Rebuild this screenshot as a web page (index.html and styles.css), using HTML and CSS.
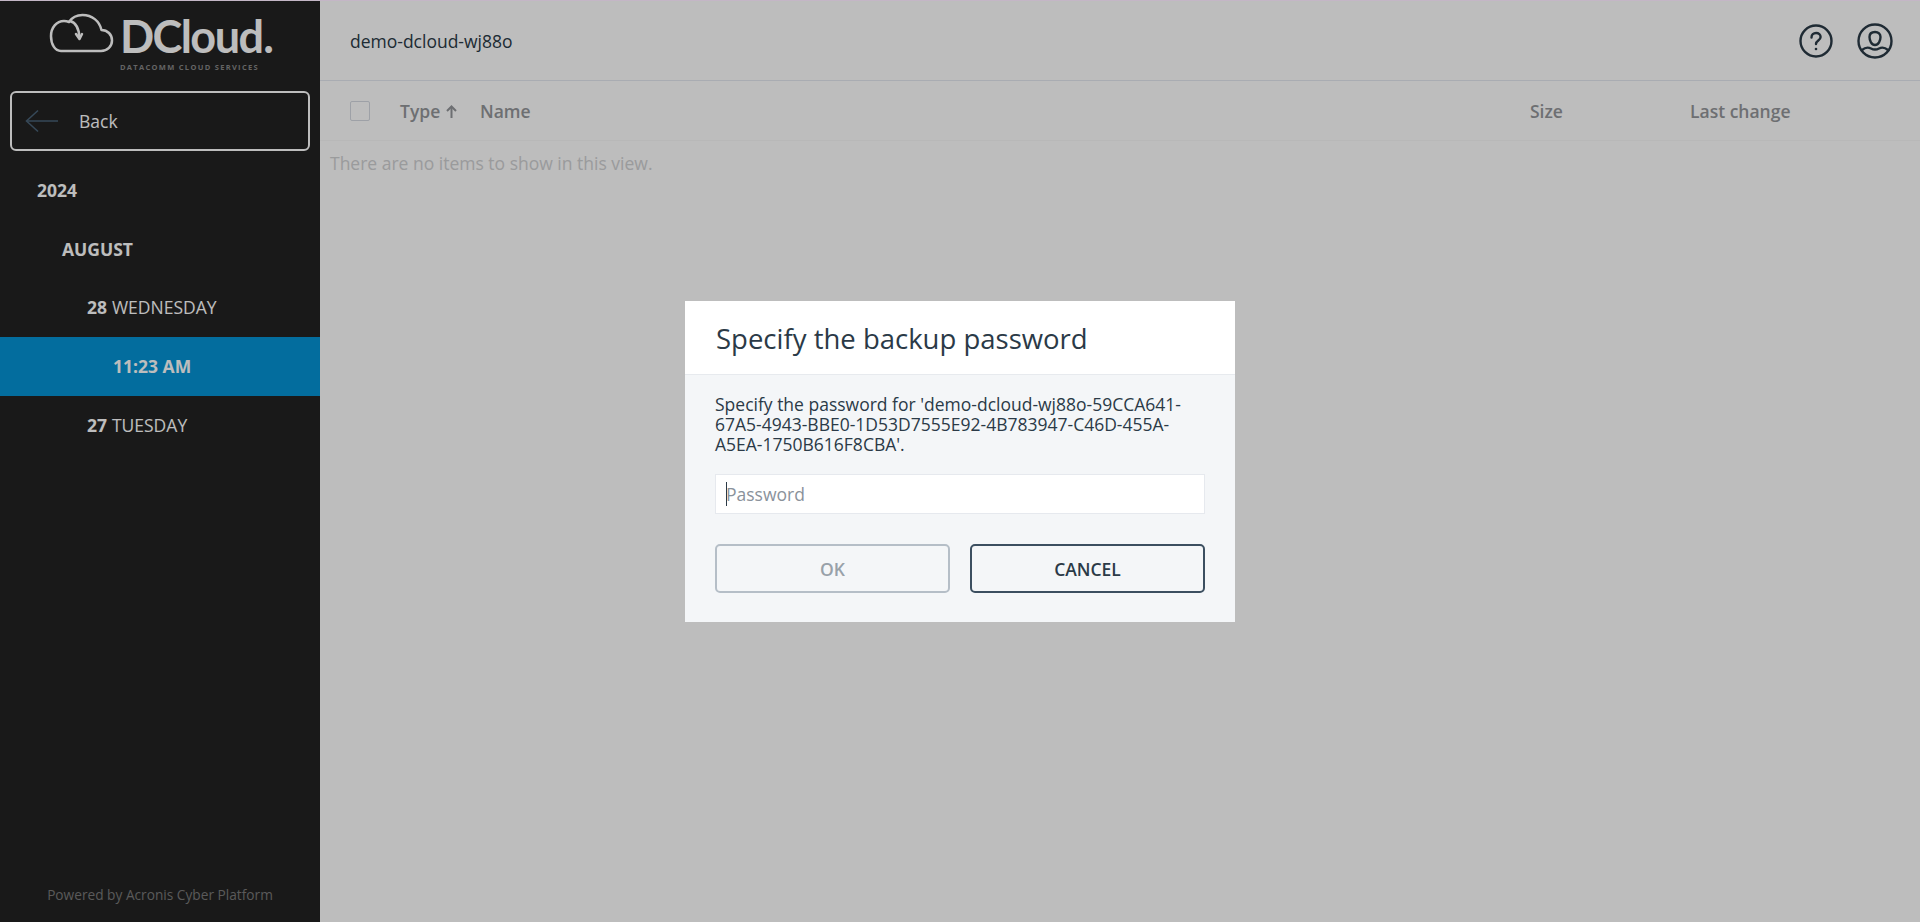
FILE: index.html
```html
<!DOCTYPE html>
<html lang="en">
<head>
    <meta charset="UTF-8">
    <meta name="viewport" content="width=device-width, initial-scale=1.0">
    <title>Backup browser</title>
    <link rel="stylesheet" href="styles.css">
</head>
<body>
    <div class="app">
        <aside class="sidebar">
            <div class="logo">
                <svg class="logo-cloud" width="65" height="40" viewBox="0 0 65 40" fill="none" stroke="currentColor" stroke-width="2.5" stroke-linecap="round" stroke-linejoin="round">
                    <path d="M12 38h40c6.500 0 11-4.800 11-10.500 0-6-4.500-10.500-10.500-10.500C50.500 8 43 2 33.500 2c-5.800 0-10.500 2.500-13.500 7-1.700-.7-3.300-1-5-1C7.500 8 2 14.500 2 23c0 8.500 4 15 10 15z"/>
                    <path d="M21 8c5.500 1.500 9 7 9.500 17"/>
                    <path d="M27 21l3.500 5 2.500-5"/>
                </svg>
                <div class="logo-text">
                    <div class="logo-name">DCloud<span class="logo-dot">.</span></div>
                    <div class="logo-tag">DATACOMM CLOUD SERVICES</div>
                </div>
            </div>
            <a class="btn-back">
                <svg width="34" height="24" viewBox="0 0 34 24" fill="none" stroke="currentColor" stroke-width="1.500">
                    <path d="M33 12H2"/>
                    <path d="M13 1.500L1.500 12 13 22.500"/>
                </svg>
                <span>Back</span>
            </a>
            <ul class="tree">
                <li class="tree-item level-0"><b>2024</b></li>
                <li class="tree-item level-1"><b>AUGUST</b></li>
                <li class="tree-item level-2"><b>28</b> WEDNESDAY</li>
                <li class="tree-item level-3 active"><b>11:23 AM</b></li>
                <li class="tree-item level-2"><b>27</b> TUESDAY</li>
            </ul>
            <div class="powered">Powered by Acronis Cyber Platform</div>
        </aside>

        <main class="content">
            <header class="topbar">
                <div class="topbar-title">demo-dcloud-wj88o</div>
                <div class="topbar-icons">
                    <svg width="34" height="34" viewBox="0 0 34 34" fill="none" stroke="currentColor" stroke-width="2.400" stroke-linecap="round">
                        <circle cx="17" cy="17" r="15.500"/>
                        <path d="M12.500 13.500c0-2.800 2-4.500 4.600-4.500 2.600 0 4.500 1.700 4.500 4 0 3.500-4.600 3.500-4.600 7"/>
                        <circle cx="17" cy="25" r="1.300" fill="currentColor" stroke="none"/>
                    </svg>
                    <svg width="36" height="36" viewBox="0 0 36 36" fill="none" stroke="currentColor" stroke-width="2.400" stroke-linecap="round">
                        <circle cx="18" cy="18" r="16.500"/>
                        <path d="M18 9c-3.500 0-5.500 2-5.500 5 0 3.500 2 8 5.500 8s5.500-4.500 5.500-8c0-3-2-5-5.500-5z"/>
                        <path d="M5 27c3-2.500 6-3 9-1.500 2.500 1.300 5.500 1.300 8 0 3-1.500 6-1 9 1.500"/>
                    </svg>
                </div>
            </header>
            <div class="list-head">
                <span class="check"></span>
                <span class="col col-type">Type
                    <svg class="sort" width="11" height="13" viewBox="0 0 11 13" fill="none" stroke="currentColor" stroke-width="2">
                        <path d="M5.500 13V2"/>
                        <path d="M1 6l4.500-4.500L10 6"/>
                    </svg>
                </span>
                <span class="col col-name">Name</span>
                <span class="col col-size">Size</span>
                <span class="col col-change">Last change</span>
            </div>
            <div class="empty">There are no items to show in this view.</div>
        </main>
    </div>

    <div class="overlay">
        <div class="modal">
            <div class="modal-head">Specify the backup password</div>
            <div class="modal-body">
                <p class="modal-text">Specify the password for 'demo-dcloud-wj88o-59CCA641-67A5-4943-BBE0-1D53D7555E92-4B783947-C46D-455A-A5EA-1750B616F8CBA'.</p>
                <div class="field">
                    <input type="password" class="input" placeholder="Password">
                </div>
                <div class="modal-actions">
                    <button class="btn btn-disabled" disabled>OK</button>
                    <button class="btn">CANCEL</button>
                </div>
            </div>
        </div>
    </div>
    <div class="top-line"></div>
</body>
</html>
```

FILE: styles.css
```css
* {
    box-sizing: border-box;
}

html, body {
    height: 100%;
}

body {
    margin: 0;
    font-family: 'Open Sans', 'Noto Sans', sans-serif;
    font-size: 17.5px;
    color: #2b3a47;
    background-color: white;
    overflow: hidden;
}

.app {
    display: flex;
    height: 100%;
}

.top-line {
    position: fixed;
    top: 0;
    left: 0;
    right: 0;
    height: 1px;
    background-color: #c4b6c6;
}

/* sidebar */
.sidebar {
    width: 320px;
    flex-shrink: 0;
    display: flex;
    flex-direction: column;
    background-color: #232323;
    color: white;
}

.logo {
    height: 75px;
    padding: 13px 0 0 49px;
    display: flex;
    gap: 6px;
}

.logo-name {
    font-family: 'Lato', sans-serif;
    font-weight: 700;
    font-size: 45px;
    line-height: 40px;
    letter-spacing: -1.6px;
    margin-top: 3px;
    white-space: nowrap;
}

.logo-dot {
    margin-left: 1px;
}

.logo-tag {
    margin-top: 6px;
    font-size: 7.500px;
    line-height: 10px;
    font-weight: 700;
    letter-spacing: 1.300px;
    color: #888;
    white-space: nowrap;
}

.btn-back {
    margin: 16px 10px 9px;
    height: 60px;
    padding-left: 13px;
    display: flex;
    align-items: center;
    gap: 20px;
    border: 2px solid white;
    border-radius: 6px;
}

.btn-back svg {
    color: #4a6378;
}

.tree {
    list-style: none;
    margin: 0;
    padding: 0;
}

.tree-item {
    height: 59px;
    display: flex;
    align-items: center;
    gap: 0.28em;
}

.tree-item b {
    font-weight: 700;
}

.level-0 { padding-left: 37px; }
.level-1 { padding-left: 62px; }
.level-2 { padding-left: 87px; padding-bottom: 1px; }
.level-3 { padding-left: 113px; padding-bottom: 1px; }

.tree-item.active {
    background-color: #0594d5;
}

.powered {
    margin-top: auto;
    padding-bottom: 17px;
    text-align: center;
    font-size: 13.700px;
    line-height: 20px;
    color: #7a7a7a;
}

/* main area */
.content {
    flex: 1;
    min-width: 0;
}

.topbar {
    height: 81px;
    padding: 2px 27px 0 30px;
    display: flex;
    align-items: center;
    justify-content: space-between;
    border-bottom: 1px solid #e4e9f1;
}

.topbar-icons {
    display: flex;
    align-items: center;
    gap: 24px;
    margin-top: -1px;
}

.list-head {
    height: 60px;
    padding-left: 30px;
    display: flex;
    align-items: center;
    border-bottom: 1px solid #f8f8f8;
    font-weight: 600;
    color: #94969a;
}

.check {
    width: 20px;
    height: 20px;
    border: 1px solid #d5dae2;
    border-radius: 2px;
    background-color: white;
}

.col {
    white-space: nowrap;
}

.col-type { margin-left: 30px; width: 80px; }
.col-name { width: 1050px; }
.col-size { width: 160px; }

.sort {
    margin-left: 1px;
}

.empty {
    padding: 11px 10px;
    line-height: 22px;
    color: #d0d1d3;
}

/* password dialog */
.overlay {
    position: fixed;
    top: 0;
    left: 0;
    right: 0;
    bottom: 0;
    display: flex;
    align-items: center;
    justify-content: center;
    background-color: rgba(0,0,0,0.26);
}

.modal {
    width: 550px;
    height: 321px;
    background-color: #f4f6f8;
}

.modal-head {
    height: 74px;
    padding: 3px 0 0 31px;
    display: flex;
    align-items: center;
    background-color: white;
    border-bottom: 1px solid #e7eaee;
    font-size: 27.500px;
}

.modal-body {
    padding: 19px 30px;
}

.modal-text {
    margin: 0;
    line-height: 20px;
}

.field {
    position: relative;
    margin-top: 20px;
}

.field::before {
    content: "";
    position: absolute;
    left: 11px;
    top: 8px;
    width: 1px;
    height: 24px;
    background-color: #2b3a47;
}

.input {
    display: block;
    width: 100%;
    height: 40px;
    padding: 0 10px;
    border: 1px solid #e6e9ee;
    background-color: white;
    font-family: inherit;
    font-size: 17.500px;
    outline: none;
}

.input::placeholder {
    color: #8a929b;
    opacity: 1;
}

.modal-actions {
    display: flex;
    gap: 20px;
    margin-top: 30px;
}

.btn {
    flex: 1;
    height: 49px;
    padding: 2px 0 0;
    border: 2px solid #3c4f60;
    border-radius: 5px;
    background-color: transparent;
    font-family: inherit;
    font-size: 17.500px;
    font-weight: 600;
    color: #2b3a47;
}

.btn-disabled {
    border-color: #b5bec7;
    color: #98a1a9;
}
```
